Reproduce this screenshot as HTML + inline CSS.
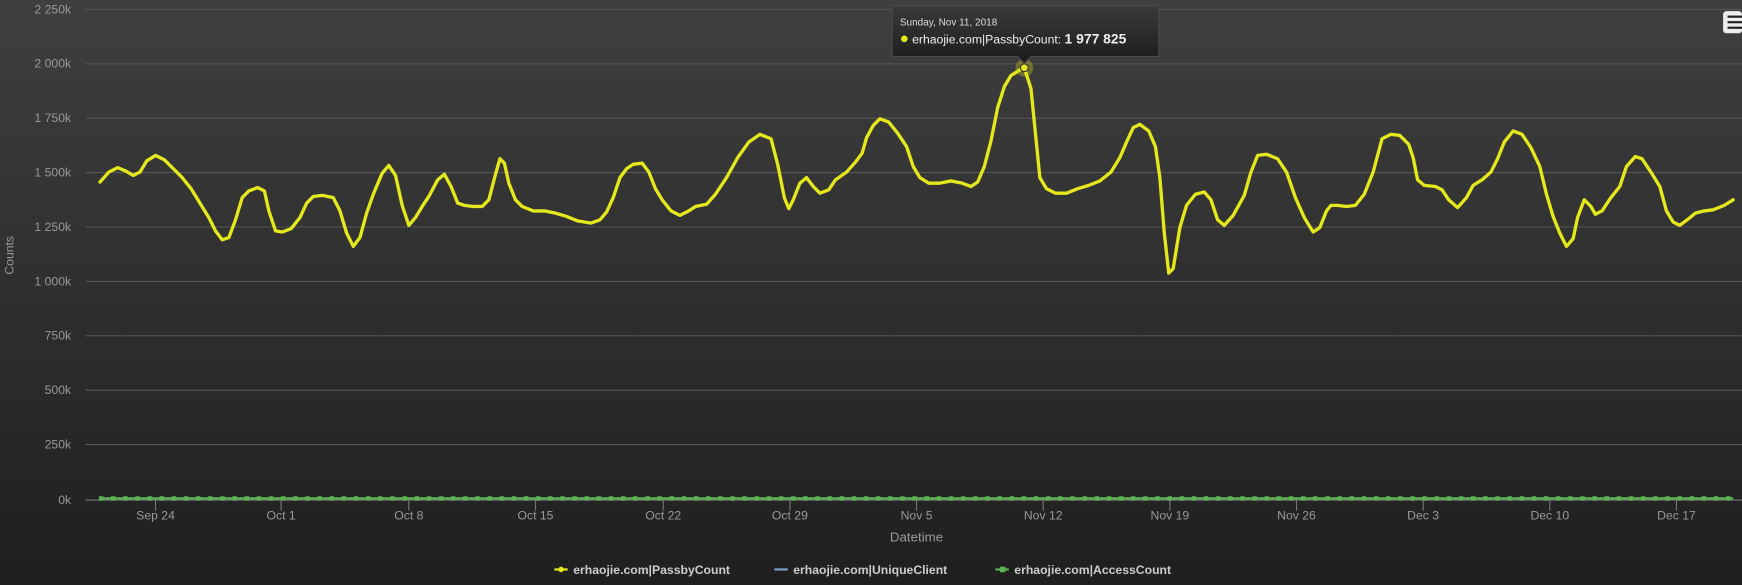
<!DOCTYPE html>
<html><head><meta charset="utf-8"><style>
html,body{margin:0;padding:0;width:1742px;height:585px;overflow:hidden;background:#2a2a2a}
svg{display:block}
text{font-family:"Liberation Sans",sans-serif}
</style></head><body>
<svg width="1742" height="585" viewBox="0 0 1568 527" preserveAspectRatio="none">
<defs>
<linearGradient id="bg" x1="0" y1="0" x2="0" y2="1"><stop offset="0" stop-color="#3f3f3f"/><stop offset="1" stop-color="#1f1f1f"/></linearGradient>
<linearGradient id="tt" x1="0" y1="0" x2="0" y2="1"><stop offset="0" stop-color="#3a3a3a"/><stop offset="1" stop-color="#1c1c1c"/></linearGradient>
</defs>
<rect width="1568" height="527" fill="url(#bg)"/>
<g stroke="#565656" stroke-width="1">
<line x1="77" x2="1568" y1="8.5" y2="8.5"/><line x1="77" x2="1568" y1="57.5" y2="57.5"/>
<line x1="77" x2="1568" y1="106.5" y2="106.5"/><line x1="77" x2="1568" y1="155.5" y2="155.5"/>
<line x1="77" x2="1568" y1="204.5" y2="204.5"/><line x1="77" x2="1568" y1="253.5" y2="253.5"/>
<line x1="77" x2="1568" y1="302.5" y2="302.5"/><line x1="77" x2="1568" y1="351.5" y2="351.5"/>
<line x1="77" x2="1568" y1="400.5" y2="400.5"/>
</g>
<line x1="77" x2="1568" y1="450.5" y2="450.5" stroke="#777"/>
<g stroke="#777"><line x1="140" x2="140" y1="450" y2="460"/><line x1="253" x2="253" y1="450" y2="460"/><line x1="368" x2="368" y1="450" y2="460"/><line x1="482" x2="482" y1="450" y2="460"/><line x1="597" x2="597" y1="450" y2="460"/><line x1="711" x2="711" y1="450" y2="460"/><line x1="825" x2="825" y1="450" y2="460"/><line x1="939" x2="939" y1="450" y2="460"/><line x1="1053" x2="1053" y1="450" y2="460"/><line x1="1167" x2="1167" y1="450" y2="460"/><line x1="1281" x2="1281" y1="450" y2="460"/><line x1="1395" x2="1395" y1="450" y2="460"/><line x1="1509" x2="1509" y1="450" y2="460"/></g>
<g fill="#999" font-size="11" text-anchor="end">
<text x="64" y="12">2 250k</text><text x="64" y="61">2 000k</text><text x="64" y="110">1 750k</text><text x="64" y="159">1 500k</text><text x="64" y="208">1 250k</text><text x="64" y="257">1 000k</text><text x="64" y="306">750k</text><text x="64" y="355">500k</text><text x="64" y="404">250k</text><text x="64" y="454">0k</text>
</g>
<g fill="#999" font-size="11" text-anchor="middle">
<text x="140" y="468">Sep 24</text><text x="253" y="468">Oct 1</text><text x="368" y="468">Oct 8</text><text x="482" y="468">Oct 15</text><text x="597" y="468">Oct 22</text><text x="711" y="468">Oct 29</text><text x="825" y="468">Nov 5</text><text x="939" y="468">Nov 12</text><text x="1053" y="468">Nov 19</text><text x="1167" y="468">Nov 26</text><text x="1281" y="468">Dec 3</text><text x="1395" y="468">Dec 10</text><text x="1509" y="468">Dec 17</text>
<text x="825" y="488" font-size="12">Datetime</text>
<text transform="translate(12,230) rotate(-90)" font-size="11">Counts</text>
</g>
<line x1="90" x2="1560" y1="449" y2="449" stroke="#5ab552" stroke-width="2"/>
<line x1="89" x2="1562" y1="449" y2="449" stroke="#5ab552" stroke-width="4" stroke-dasharray="4 6.93"/>
<polyline fill="none" stroke="#e4e81c" stroke-width="3" stroke-linejoin="round" stroke-linecap="round" points="90,164 98,155 106,151 113,154 120,158 126,155 132,145 140,140 148,144 156,152 164,160 172,170 180,183 188,196 194,208 200,216 206,214 212,198 218,178 224,172 232,169 238,172 242,190 248,208 254,209 262,206 270,196 276,183 282,177 290,176 300,178 306,190 312,210 318,222 324,214 330,192 336,175 344,156 350,149 356,158 362,185 368,203 374,196 380,186 386,177 394,162 400,157 406,168 412,183 418,185 426,186 434,186 440,180 446,157 450,143 454,147 458,165 464,180 470,186 480,190 490,190 500,192 510,195 520,199 532,201 540,198 546,191 552,178 558,160 564,152 570,148 578,147 584,155 590,170 596,180 604,190 612,194 620,190 626,186 636,184 644,175 654,160 664,142 674,128 684,121 694,125 700,148 706,178 710,188 714,180 720,165 726,160 732,168 738,174 746,171 752,162 762,155 770,146 776,138 780,124 786,113 792,107 800,110 808,120 816,132 822,150 828,160 836,165 846,165 856,163 866,165 874,168 880,164 886,150 892,127 898,97 904,78 910,68 918,63 922,61 928,80 932,120 936,160 942,170 950,174 960,174 970,170 980,167 990,163 1000,155 1008,142 1014,128 1020,115 1026,112 1034,118 1040,132 1044,160 1048,210 1052,246 1056,242 1062,205 1068,185 1076,175 1084,173 1090,180 1096,198 1102,203 1110,194 1120,176 1126,155 1132,140 1140,139 1150,143 1158,155 1166,178 1174,196 1182,209 1188,205 1194,190 1198,185 1204,185 1212,186 1220,185 1228,175 1236,155 1244,125 1252,121 1260,122 1268,130 1272,142 1276,162 1282,167 1292,168 1298,171 1304,180 1312,187 1320,178 1326,167 1334,162 1342,155 1348,143 1354,128 1362,118 1370,121 1378,133 1386,150 1392,175 1398,195 1404,210 1410,222 1416,215 1420,196 1426,180 1432,186 1436,193 1442,190 1450,178 1458,168 1464,150 1472,141 1478,143 1486,155 1494,168 1500,190 1506,200 1512,203 1520,197 1526,192 1534,190 1542,189 1552,185 1560,180"/>
<circle cx="922" cy="61" r="8" fill="#e4e81c" fill-opacity="0.3"/>
<circle cx="922" cy="61" r="3.5" fill="#e4e81c" stroke="#333" stroke-width="1"/>
<path d="M803,5 H1043 V51 H928 L922,57 L916,51 H803 Z" fill="url(#tt)" stroke="#4a4a4a"/>
<text x="810" y="23" fill="#ddd" font-size="9">Sunday, Nov 11, 2018</text>
<circle cx="814" cy="35" r="3" fill="#e4e81c"/>
<text x="821" y="39" fill="#eee" font-size="11">erhaojie.com|PassbyCount: <tspan font-weight="bold" font-size="12.5">1 977 825</tspan></text>
<rect x="1551" y="10" width="17" height="20" rx="3" fill="#eee"/>
<g stroke="#222" stroke-width="2"><line x1="1555" x2="1568" y1="15" y2="15"/><line x1="1555" x2="1568" y1="20" y2="20"/><line x1="1555" x2="1568" y1="25" y2="25"/></g>
<g font-size="11" fill="#ccc" font-weight="bold">
<line x1="499" x2="511" y1="513" y2="513" stroke="#e4e81c" stroke-width="2"/><circle cx="505" cy="513" r="2.5" fill="#e4e81c"/>
<text x="516" y="517">erhaojie.com|PassbyCount</text>
<line x1="697" x2="709" y1="513" y2="513" stroke="#7aa0c8" stroke-width="2"/>
<text x="714" y="517">erhaojie.com|UniqueClient</text>
<line x1="896" x2="908" y1="513" y2="513" stroke="#5ab552" stroke-width="2"/><rect x="900" y="510.5" width="5" height="5" fill="#5ab552"/>
<text x="913" y="517">erhaojie.com|AccessCount</text>
</g>
</svg>
</body></html>
